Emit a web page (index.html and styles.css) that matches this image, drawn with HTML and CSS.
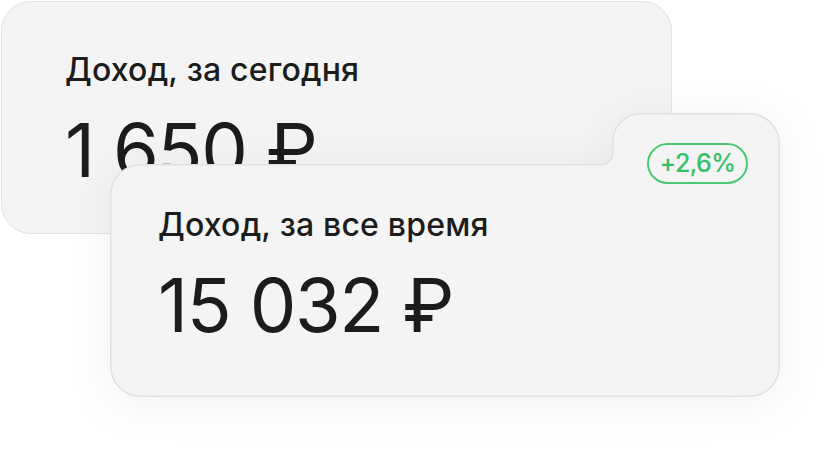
FILE: index.html
```html
<!DOCTYPE html>
<html lang="ru">
<head>
<meta charset="utf-8">
<title>Доход</title>
<link rel="stylesheet" href="styles.css">
</head>
<body>
<div class="stage">
  <section class="card-today">
    <p class="label">Доход, за сегодня</p>
    <p class="amount">1 650 ₽</p>
  </section>
  <section class="card-total">
    <svg class="card-total__bg" viewBox="0 0 670 284" preserveAspectRatio="none" aria-hidden="true">
      <path d="M30 51.75 L490.75 51.75 A12 12 0 0 0 502.75 39.75 L502.75 28.75 A28 28 0 0 1 530.75 0.75 L639.25 0.75 A30 30 0 0 1 669.25 30.75 L669.25 253.25 A30 30 0 0 1 639.25 283.25 L30.75 283.25 A30 30 0 0 1 0.75 253.25 L0.75 81.75 A30 30 0 0 1 30.75 51.75 Z"/>
    </svg>
    <div class="card-total__body">
      <span class="badge">+2,6%</span>
      <p class="label">Доход, за все время</p>
      <p class="amount">15 032 ₽</p>
    </div>
  </section>
</div>
</body>
</html>
```

FILE: styles.css
```css
html, body {
  margin: 0;
  padding: 0;
  background: #ffffff;
}

body {
  width: 828px;
  height: 452px;
  overflow: hidden;
  font-family: "Inter", "Noto Sans", sans-serif;
  color: #1c1c1c;
}

.stage {
  padding: 1px 0 0 1px;
}

.label,
.amount {
  margin: 0;
  line-height: 1;
  white-space: nowrap;
}

.label {
  font-size: 32px;
  font-weight: 500;
  letter-spacing: 0.2px;
}

.amount {
  font-size: 74px;
  font-weight: 400;
  letter-spacing: -1.4px;
  margin-top: 27px;
}

.card-today {
  box-sizing: border-box;
  width: 671px;
  height: 233px;
  padding: 52px 0 0 63px;
  background: #f4f4f4;
  border: 1.5px solid #e2e2e2;
  border-radius: 30px;
  overflow: hidden;
}

.card-total {
  position: relative;
  width: 670px;
  height: 284px;
  margin: -121px 0 0 109px;
}

.card-total__bg {
  position: absolute;
  left: 0;
  top: 0;
  width: 100%;
  height: 100%;
  overflow: visible;
  filter: drop-shadow(0 6px 22px rgba(0, 0, 0, 0.06));
}

.card-total__bg path {
  fill: #f4f4f4;
  stroke: #e0e0e0;
  stroke-width: 1.5;
}

.card-total__body {
  position: relative;
  display: flex;
  flex-direction: column;
  align-items: flex-start;
  padding: 30px 32px 0 48px;
}

.badge {
  align-self: flex-end;
  box-sizing: border-box;
  display: flex;
  align-items: center;
  justify-content: center;
  width: 101px;
  height: 41px;
  border: 2px solid #4cc873;
  border-radius: 999px;
  color: #34c065;
  font-size: 25px;
  font-weight: 500;
  line-height: 1;
  letter-spacing: -0.6px;
  margin-bottom: 25px;
}
```
